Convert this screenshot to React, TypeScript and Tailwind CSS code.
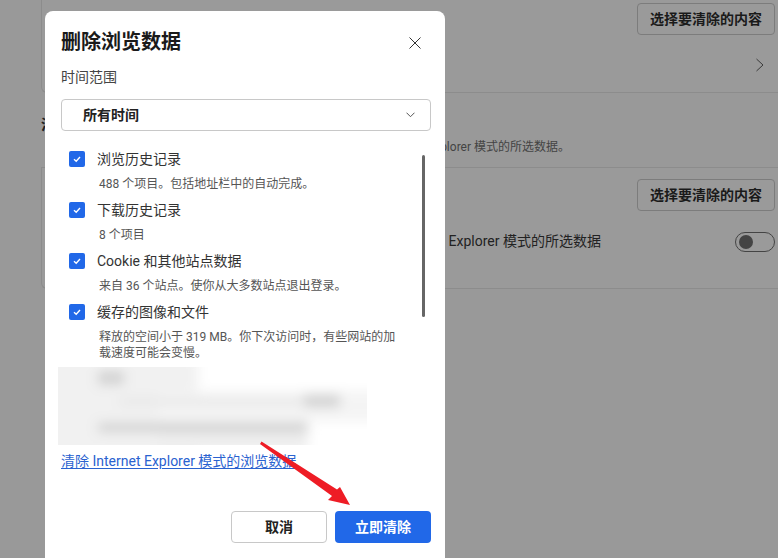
import React from "react";

const font = { fontFamily: 'Roboto,"Noto Sans CJK SC",sans-serif' };

function Check() {
  return (
    <span className="flex h-4 w-4 shrink-0 items-center justify-center rounded-[2px] bg-[#2168e8]">
      <svg width="10" height="10" viewBox="0 0 10 10" fill="none">
        <path d="M2 5.2 L4.2 7.2 L8 3" stroke="#fff" strokeWidth="1.4" />
      </svg>
    </span>
  );
}

function Item({ title, children }: { title: string; children: React.ReactNode }) {
  return (
    <div className="flex flex-col">
      <div className="flex h-[20px] items-center gap-[12px] pl-[8px]">
        <Check />
        <span className="text-[14px] leading-[20px] text-[#333]">{title}</span>
      </div>
      <div className="mt-[7px] w-[338px] pl-[38px] text-[12px] leading-[16px] text-[#555]">{children}</div>
    </div>
  );
}

function OutlineBtn() {
  return (
    <button className="h-[32px] w-[138px] rounded-[4px] border border-[#7c7c7c] text-[14px] font-semibold text-[#1a1a1a]">
      选择要清除的内容
    </button>
  );
}

export default function App() {
  return (
    <div style={font} className="relative h-[558px] w-[778px] overflow-hidden bg-[#999999]">
      <div className="pl-[41px]">
        <div className="h-[93px] rounded-bl-[6px] border-b border-l border-[#8c8c8c] bg-[#9a9a9a]">
          <div className="flex justify-end pr-[3px] pt-[3px]"><OutlineBtn /></div>
          <div className="flex justify-end pr-[13px] pt-[22px]">
            <svg width="10" height="16" viewBox="0 0 10 16" fill="none">
              <path d="M1.5 2 L8 8 L1.5 14" stroke="#3a3a3a" strokeWidth="1" />
            </svg>
          </div>
        </div>
        <div className="flex h-[74px] flex-col pt-[22px]">
          <div className="text-[15px] font-semibold leading-[20px] text-[#222]">清除</div>
          <div className="mt-[4px] flex justify-end pr-[208px] text-[12px] leading-[16px] text-[#444]">
            Explorer 模式的所选数据。
          </div>
        </div>
        <div className="h-[122px] rounded-bl-[6px] border-y border-l border-[#8c8c8c] bg-[#9a9a9a]">
          <div className="flex justify-end pr-[3px] pt-[11px]"><OutlineBtn /></div>
          <div className="flex items-center justify-end gap-[134px] pr-[3px] pt-[20px]">
            <span className="text-[14px] text-[#222]">Explorer 模式的所选数据</span>
            <span className="flex h-[20px] w-[40px] items-center rounded-full border border-[#444] pl-[3px]">
              <span className="h-[14px] w-[14px] rounded-full bg-[#444]" />
            </span>
          </div>
        </div>
      </div>

      <div className="absolute left-[45px] top-[11px] flex h-[560px] w-[400px] flex-col rounded-[8px] bg-white">
        <div className="flex items-center justify-between pl-[16px] pr-[24px] pt-[15px]">
          <h1 className="text-[20px] font-bold leading-[32px] text-[#1a1a1a]">删除浏览数据</h1>
          <svg className="mt-[2px]" width="12" height="12" viewBox="0 0 12 12" fill="none">
            <path d="M0.5 0.5 L11.5 11.5 M11.5 0.5 L0.5 11.5" stroke="#333" strokeWidth="1" />
          </svg>
        </div>
        <div className="px-[16px] pt-[9px] text-[14px] leading-[20px] text-[#444]">时间范围</div>
        <div className="ml-[16px] mr-[14px] mt-[12px] flex h-[32px] items-center justify-between rounded-[4px] border border-[#c8c8c8] pl-[21px] pr-[15px]">
          <span className="text-[14px] font-bold text-[#222]">所有时间</span>
          <svg width="9" height="6" viewBox="0 0 9 6" fill="none">
            <path d="M0.5 0.7 L4.5 4.7 L8.5 0.7" stroke="#555" strokeWidth="1" />
          </svg>
        </div>
        <div className="relative mt-[18px] flex h-[218px] flex-col gap-[8px] pl-[16px]">
          <Item title="浏览历史记录">488 个项目。包括地址栏中的自动完成。</Item>
          <Item title="下载历史记录">8 个项目</Item>
          <Item title="Cookie 和其他站点数据">来自 36 个站点。使你从大多数站点退出登录。</Item>
          <Item title="缓存的图像和文件">释放的空间小于 319 MB。你下次访问时，有些网站的加载速度可能会变慢。</Item>
          <span className="absolute left-[377px] top-[6px] h-[162px] w-[3px] rounded-full bg-[#666]" />
        </div>
        <svg className="ml-[13px] shrink-0" width="309" height="78" viewBox="0 0 309 78">
          <defs>
            <filter id="b" x="-20%" y="-80%" width="140%" height="260%">
              <feGaussianBlur stdDeviation="6" />
            </filter>
            <clipPath id="c"><rect width="309" height="78" /></clipPath>
          </defs>
          <g clipPath="url(#c)">
            <rect width="309" height="78" fill="#ffffff" />
            <g filter="url(#b)">
              <rect x="-20" y="-10" width="160" height="100" fill="#f1f1f1" />
              <rect x="100" y="24" width="230" height="30" fill="#f4f4f4" />
              <rect x="100" y="54" width="150" height="30" fill="#eeeeee" />
              <rect x="40" y="4" width="26" height="14" fill="#d2d2d2" />
              <rect x="62" y="32" width="190" height="5" fill="#e2e2e2" />
              <rect x="246" y="28" width="36" height="12" fill="#d0d0d0" />
              <rect x="40" y="56" width="210" height="9" fill="#d0d0d0" />
            </g>
          </g>
        </svg>
        <a className="ml-[16px] mt-[6px] w-fit text-[14px] leading-[20px] text-[#2a62d0] underline underline-offset-2">
          清除 Internet Explorer 模式的浏览数据
        </a>
        <div className="mt-[40px] flex justify-end gap-[8px] pr-[14px]">
          <button className="h-[32px] w-[96px] rounded-[4px] border border-[#c8c8c8] bg-white text-[14px] font-bold text-[#222]">取消</button>
          <button className="h-[32px] w-[96px] rounded-[4px] bg-[#2168e8] text-[14px] font-bold text-white">立即清除</button>
        </div>
      </div>

      <svg className="absolute left-[255px] top-[437px]" width="100" height="75" viewBox="0 0 100 75">
        <polygon points="5,7 6.5,4.5 82,52.5 85,50 95,68 73,63 77,59" fill="#ee1c25" />
      </svg>
    </div>
  );
}
